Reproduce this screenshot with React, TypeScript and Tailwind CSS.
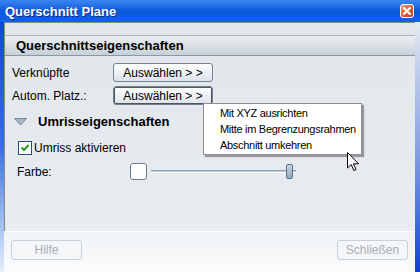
import React from "react";

const font = { fontFamily: '"Liberation Sans", Arial, sans-serif' };

function XPButton({ children, pressed = false, disabled = false, className = "" }: { children: React.ReactNode; pressed?: boolean; disabled?: boolean; className?: string }) {
  if (disabled) {
    return (
      <div className={`flex items-center justify-center rounded-[3px] border border-[#c9d0d6] bg-[#f4f6f8] text-[12px] text-[#a9afb5] ${className}`}>
        {children}
      </div>
    );
  }
  return (
    <div className={`flex items-center justify-center rounded-[3px] border border-[#74828f] bg-gradient-to-b from-[#ffffff] to-[#dde3e9] text-[12px] text-black ${className}`}>
      <div className={`flex h-full w-full items-center justify-center rounded-[2px] ${pressed ? "border border-[#4a5866]" : "border border-transparent"}`}>
        {children}
      </div>
    </div>
  );
}

export default function App() {
  return (
    <div className="relative flex h-[272px] w-[420px] flex-col overflow-hidden bg-[#e2e7ec]" style={font}>
      {/* Title bar */}
      <div className="flex h-[22px] shrink-0 items-center justify-between bg-gradient-to-b from-[#3b86f2] via-[#0c58dc] to-[#1461e6] pl-[5px] pr-[6px]">
        <span className="text-[13px] font-bold leading-none text-white [text-shadow:1px_1px_0_#0a2a8a]">Querschnitt Plane</span>
        <div className="flex h-[14px] w-[14px] items-center justify-center rounded-[3px] border border-white bg-gradient-to-br from-[#f0a080] via-[#e05a2a] to-[#c8401a]">
          <svg width="8" height="8" viewBox="0 0 8 8">
            <path d="M1 1 L7 7 M7 1 L1 7" stroke="white" strokeWidth="2" strokeLinecap="square" />
          </svg>
        </div>
      </div>

      <div className="flex flex-1">
        {/* left border */}
        <div className="w-[4px] shrink-0 bg-gradient-to-b from-[#0a48d8] via-[#3a6ee0] to-[#e8eefa]" />
        <div className="flex flex-1 flex-col">
          {/* Panel */}
          <div className="flex h-[209px] flex-col border-l border-t border-[#858a84] bg-gradient-to-b from-[#e1e6eb] to-[#e9edf1]">
            <div className="h-[12px]" />
            <div className="flex h-[21px] items-center border-b border-t border-b-[#8c99a4] border-t-[#a9b4bd] bg-gradient-to-b from-[#edf0f3] to-[#c6d0d8] pl-[11px] text-[13px] font-bold text-black">
              Querschnittseigenschaften
            </div>
            <div className="h-[7px]" />
            <div className="flex h-[19px] items-center">
              <span className="w-[108px] pl-[7px] text-[12px] text-black">Verknüpfte</span>
              <XPButton className="h-[19px] w-[100px]">Auswählen &gt; &gt;</XPButton>
            </div>
            <div className="h-[4px]" />
            <div className="flex h-[19px] items-center">
              <span className="w-[108px] pl-[7px] text-[12px] text-black">Autom. Platz.:</span>
              <XPButton pressed className="h-[19px] w-[100px]">Auswählen &gt; &gt;</XPButton>
            </div>
            <div className="h-[8px]" />
            <div className="flex h-[18px] items-center">
              <svg width="13" height="8" viewBox="0 0 13 8" className="ml-[9px]">
                <path d="M0.5 0.5 H12.5 L6.5 7 Z" fill="#a8b6c6" stroke="#7489a0" strokeWidth="1" />
              </svg>
              <span className="ml-[11px] text-[13px] font-bold text-black">Umrisseigenschaften</span>
            </div>
            <div className="h-[9px]" />
            <div className="flex h-[15px] items-center">
              <div className="ml-[13px] flex h-[14px] w-[14px] items-center justify-center border border-[#1c5180] bg-white">
                <svg width="10" height="10" viewBox="0 0 10 10">
                  <path d="M1.5 4.5 L4 7 L8.5 2" fill="none" stroke="#21a121" strokeWidth="2" />
                </svg>
              </div>
              <span className="ml-[2px] text-[12px] text-black">Umriss aktivieren</span>
            </div>
            <div className="h-[8px]" />
            <div className="flex h-[17px] items-center">
              <span className="w-[125px] pl-[12px] text-[12px] text-black">Farbe:</span>
              <div className="h-[17px] w-[17px] rounded-[3px] border border-[#6b7b8b] bg-white" />
              <div className="relative ml-[4px] flex h-[17px] w-[145px] items-center">
                <div className="h-[3px] w-full border-b border-t border-b-white border-t-[#8aa0b5] bg-[#c0ccd8]" />
                <div className="absolute left-[135px] top-[1px] h-[15px] w-[7px] rounded-[2px] border border-[#56708a] bg-gradient-to-b from-[#c8d4e0] to-[#98aabd]" />
              </div>
            </div>
          </div>
          {/* Footer */}
          <div className="flex flex-1 items-start justify-between border-t border-white bg-gradient-to-b from-[#f0f3f6] to-[#fbfcfd] pl-[7px] pr-[7px] pt-[8px]">
            <XPButton disabled className="h-[20px] w-[71px]">Hilfe</XPButton>
            <XPButton disabled className="h-[20px] w-[71px]">Schließen</XPButton>
          </div>
        </div>
        {/* right border */}
        <div className="w-[5px] shrink-0 bg-gradient-to-b from-[#e4e9ef] via-[#8aa2e4] to-[#0f3fd4]" />
      </div>

      {/* Popup menu */}
      <div className="absolute left-[203px] top-[103px] flex w-[159px] flex-col whitespace-nowrap border border-[#8e8e8e] bg-white py-[1px] text-[11px] tracking-[-0.3px] text-black shadow-[2px_2px_1px_rgba(0,0,0,0.35)]">
        <div className="flex h-[16px] items-center pl-[16px]">Mit XYZ ausrichten</div>
        <div className="flex h-[16px] items-center pl-[16px]">Mitte im Begrenzungsrahmen</div>
        <div className="flex h-[16px] items-center pl-[16px]">Abschnitt umkehren</div>
      </div>

      {/* Cursor */}
      <svg className="absolute left-[347px] top-[152px]" width="13" height="20" viewBox="0 0 13 20">
        <path d="M0.5 0.5 V16 L4.2 12.5 L6.8 18.5 L9 17.5 L6.5 11.8 H11.5 Z" fill="white" stroke="black" strokeWidth="1" strokeLinejoin="miter" />
      </svg>
    </div>
  );
}
